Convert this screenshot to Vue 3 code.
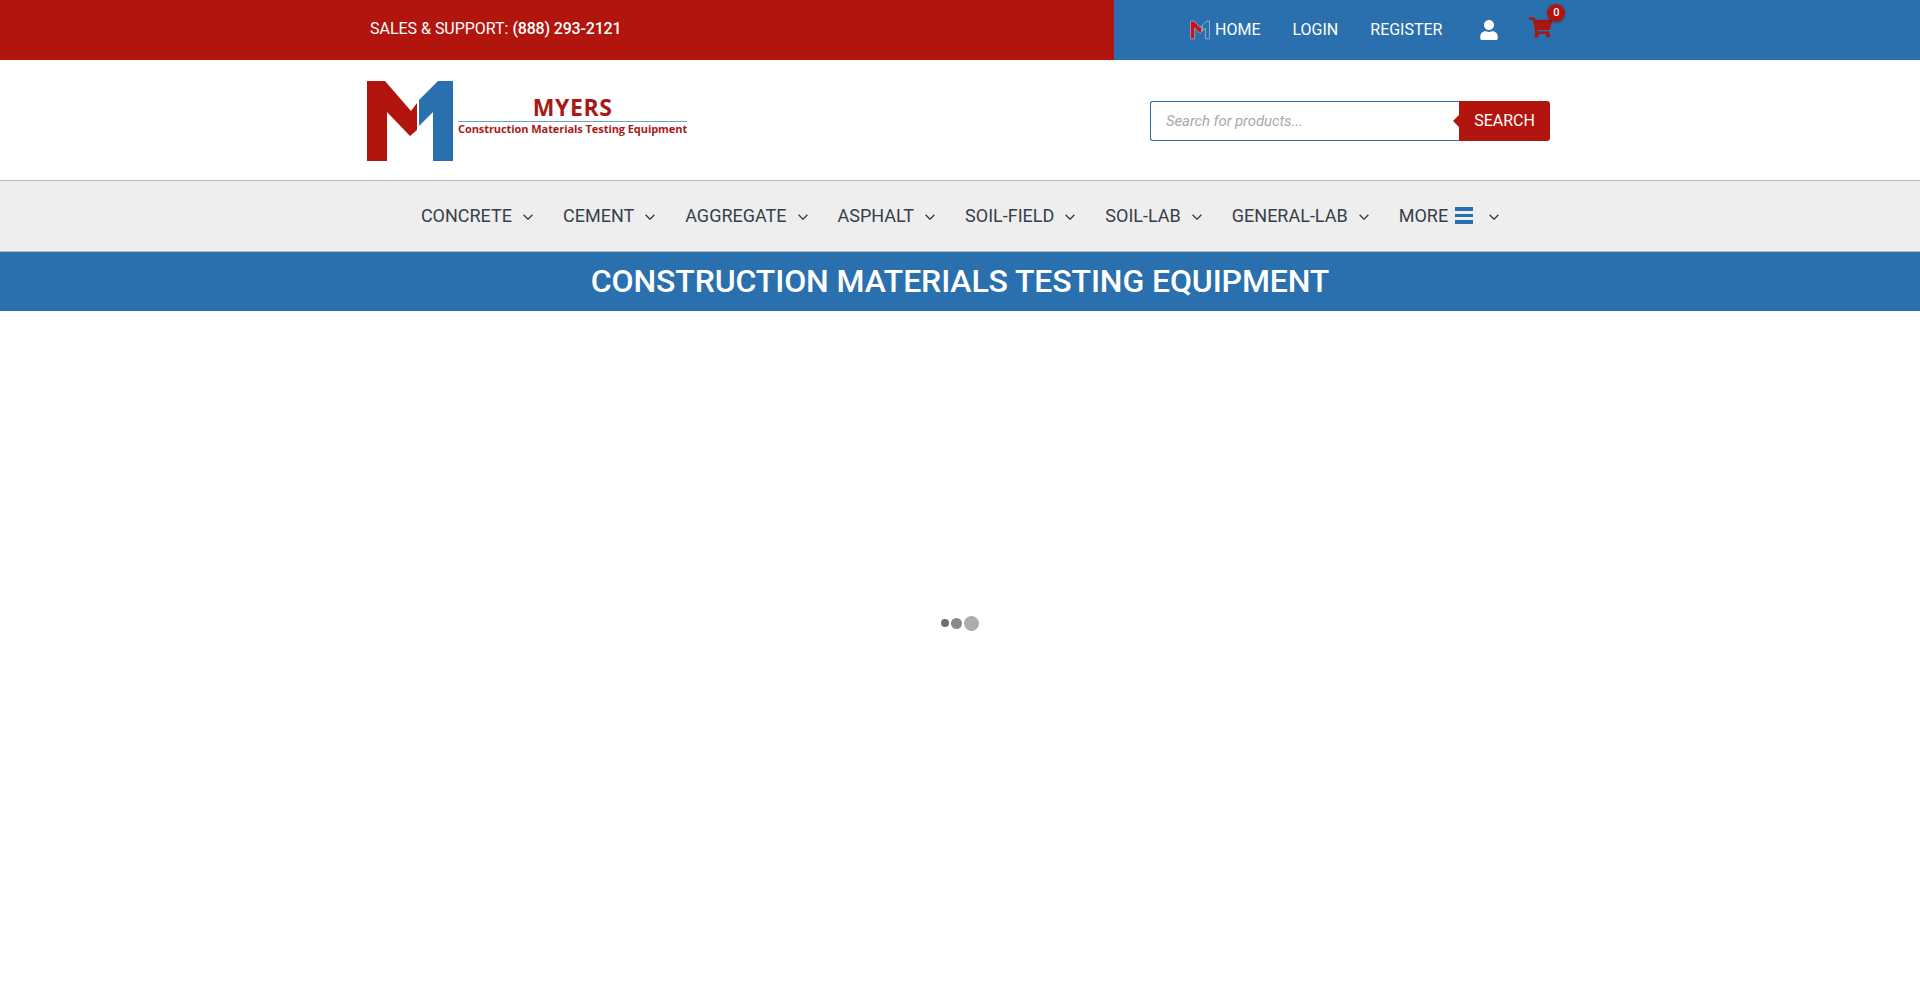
<script setup>
const topLinks = ['LOGIN', 'REGISTER']
const navItems = ['CONCRETE', 'CEMENT', 'AGGREGATE', 'ASPHALT', 'SOIL-FIELD', 'SOIL-LAB', 'GENERAL-LAB']
</script>

<template>
  <div class="page">
    <header class="topbar">
      <div class="top-left">
        <span class="sales">SALES &amp; SUPPORT: <strong>(888) 293-2121</strong></span>
      </div>
      <div class="top-right">
        <a class="top-link home">
          <svg class="home-icon" viewBox="0 0 86 80" aria-hidden="true">
            <path fill="#c4161a" stroke="#a9b6cc" stroke-width="3" d="M2 2H19L44 30L50 22V49L43 55L20 31V78H2Z" />
            <path fill="#2b70ae" stroke="#8fb2d4" stroke-width="4" d="M53 20L71 2H84V78H66V31L53 45Z" />
          </svg>
          HOME
        </a>
        <a v-for="l in topLinks" :key="l" class="top-link">{{ l }}</a>
        <svg class="user-icon" viewBox="0 0 448 512" aria-hidden="true">
          <path fill="#fff" d="M224 256c70.7 0 128-57.3 128-128S294.7 0 224 0 96 57.3 96 128s57.3 128 128 128zm89.6 32h-16.7c-22.2 10.2-46.9 16-72.9 16s-50.6-5.8-72.9-16h-16.7C60.2 288 0 348.2 0 422.4V464c0 26.5 21.5 48 48 48h352c26.5 0 48-21.5 48-48v-41.6c0-74.2-60.2-134.4-134.4-134.4z" />
        </svg>
        <span class="cart">
          <svg class="cart-icon" viewBox="0 0 576 512" aria-hidden="true">
            <path fill="#a81612" d="M528.12 301.319l47.273-208C578.806 78.301 567.391 64 551.99 64H159.208l-9.166-44.81C147.758 8.021 137.93 0 126.529 0H24C10.745 0 0 10.745 0 24v16c0 13.255 10.745 24 24 24h69.883l70.248 343.435C147.325 417.1 136 435.222 136 456c0 30.928 25.072 56 56 56s56-25.072 56-56c0-15.674-6.447-29.835-16.824-40h209.647C430.447 426.165 424 440.326 424 456c0 30.928 25.072 56 56 56s56-25.072 56-56c0-22.172-12.888-41.332-31.579-50.405l5.517-24.276c3.413-15.018-8.002-29.319-23.403-29.319H218.117l-6.545-32h293.145c11.206 0 20.92-7.754 23.403-18.681z" />
          </svg>
          <span class="badge">0</span>
        </span>
      </div>
    </header>

    <section class="masthead">
      <div class="logo">
        <svg class="logo-mark" viewBox="0 0 86 80" aria-hidden="true">
          <path fill="#b2140e" d="M0 0H18L44 30L50 22V49L43 55L20 31V80H0Z" />
          <path fill="#2b70ae" d="M52 19L71 0H86V80H66V31L52 45Z" />
        </svg>
        <div class="logo-text">
          <span class="logo-name">MYERS</span>
          <span class="logo-sub">Construction Materials Testing Equipment</span>
        </div>
      </div>
      <form class="search" @submit.prevent>
        <input class="search-input" type="text" placeholder="Search for products..." />
        <button class="search-btn" type="button">SEARCH</button>
      </form>
    </section>

    <nav class="nav">
      <a v-for="n in navItems" :key="n" class="nav-item">
        <span>{{ n }}</span>
        <svg class="chev" viewBox="0 0 10 6" aria-hidden="true"><path d="M0.6 0.8L5 5.2L9.4 0.8" /></svg>
      </a>
      <a class="nav-item">
        <span>MORE</span>
        <span class="burger"><i></i><i></i><i></i></span>
        <svg class="chev more-chev" viewBox="0 0 10 6" aria-hidden="true"><path d="M0.6 0.8L5 5.2L9.4 0.8" /></svg>
      </a>
    </nav>

    <h1 class="banner">CONSTRUCTION MATERIALS TESTING EQUIPMENT</h1>

    <main class="loader">
      <span class="dot d1"></span>
      <span class="dot d2"></span>
      <span class="dot d3"></span>
    </main>
  </div>
</template>

<style>
html, body { margin: 0; background: #fff; }
</style>

<style scoped>
.page {
  height: 993px;
  overflow: hidden;
  font-family: Roboto, "Liberation Sans", sans-serif;
  color: #363f4a;
}
.topbar {
  display: flex;
  height: 60px;
}
.top-left {
  width: 1114px;
  background: #b2140e;
  display: flex;
  align-items: center;
  padding-left: 370px;
  box-sizing: border-box;
  color: #fff;
  font-size: 16px;
  padding-bottom: 4px;
}
.sales { letter-spacing: -0.02px; }
.sales strong { font-weight: 500; font-size: 16px; letter-spacing: -0.18px; }
.top-right {
  flex: 1;
  background: #2b70ae;
  display: flex;
  align-items: center;
  padding-left: 76px;
  color: #fff;
  font-size: 16px;
}
.top-link { display: flex; align-items: center; margin-right: 32px; margin-top: -2px; }
.home-icon { width: 20px; height: 20px; margin-right: 5px; margin-top: 1px; }
.user-icon { width: 20px; height: 20px; margin-left: 5px; margin-top: 0; }
.cart { position: relative; margin-left: 30px; display: flex; }
.cart-icon { width: 23px; height: 21px; margin-top: -5px; }
.badge {
  position: absolute;
  left: 18px;
  top: -18px;
  width: 18px;
  height: 18px;
  border-radius: 50%;
  background: #b2140e;
  color: #fff;
  font-size: 11px;
  font-weight: 500;
  line-height: 18px;
  text-align: center;
  box-shadow: 0 1px 3px rgba(0, 0, 0, 0.3);
}
.masthead {
  height: 120px;
  display: flex;
  align-items: center;
  justify-content: space-between;
  padding: 0 370px 0 367px;
}
.logo { display: flex; align-items: center; gap: 5px; margin-top: 1px; }
.logo-mark { width: 86px; height: 80px; display: block; }
.logo-text {
  display: flex;
  flex-direction: column;
  align-items: center;
  font-family: "Open Sans", sans-serif;
  font-weight: 700;
  color: #a81a18;
  margin-bottom: 10px;
}
.logo-name {
  font-size: 23px;
  line-height: 24px;
  padding-bottom: 2px;
  border-bottom: 1.5px solid #6aa3d0;
  width: 229px;
  text-align: center;
  letter-spacing: 0.6px;
}
.logo-sub { font-size: 11px; line-height: 14px; white-space: nowrap; letter-spacing: -0.07px; }
.search { display: flex; width: 400px; height: 40px; margin-top: 2px; }
.search-input {
  flex: 1;
  min-width: 0;
  box-sizing: border-box;
  border: 1px solid #2b70ae;
  border-right: 0;
  border-radius: 3px 0 0 3px;
  padding: 0 15px;
  font: italic 15px Roboto, sans-serif;
  letter-spacing: -0.12px;
  outline: 0;
}
.search-input::placeholder { color: #a9a9a9; opacity: 1; }
.search-btn {
  position: relative;
  width: 91px;
  border: 0;
  border-radius: 0 3px 3px 0;
  background: #b2140e;
  color: #fff;
  font: 16px Roboto, sans-serif;
  padding: 0 0 1px;
}
.search-btn::before {
  content: "";
  position: absolute;
  left: -6px;
  top: 14px;
  border-style: solid;
  border-width: 6px 6px 6px 0;
  border-color: transparent #b2140e transparent transparent;
}
.nav {
  height: 72px;
  box-sizing: border-box;
  border-top: 1px solid #b4b5b6;
  border-bottom: 1px solid #a9bdd0;
  background: #eeeeef;
  display: flex;
  justify-content: center;
  align-items: center;
  gap: 30px;
  font-size: 18px;
  padding-bottom: 1px;
}
.nav-item { display: flex; align-items: center; }
.chev { width: 10px; height: 6px; margin-left: 11px; fill: none; stroke: #363f4a; stroke-width: 1.4; margin-top: 2px; }
.burger { width: 18px; margin-left: 7px; display: flex; flex-direction: column; gap: 3px; }
.burger i { display: block; height: 3.5px; background: #2b70ae; }
.more-chev { margin-left: 16px; }
.banner {
  margin: 0;
  height: 59px;
  line-height: 59px;
  background: #2b70ae;
  color: #fff;
  text-align: center;
  font-size: 32px;
  font-weight: 500;
  letter-spacing: -0.12px;
}
.loader {
  display: flex;
  justify-content: center;
  align-items: center;
  gap: 2px;
  padding-top: 304px;
  height: 16px;
}
.dot { border-radius: 50%; display: block; }
.d1 { width: 8px; height: 8px; background: #6e6e6e; }
.d2 { width: 11px; height: 11px; background: #8a8a8a; }
.d3 { width: 15px; height: 15px; background: #adadad; }
</style>
